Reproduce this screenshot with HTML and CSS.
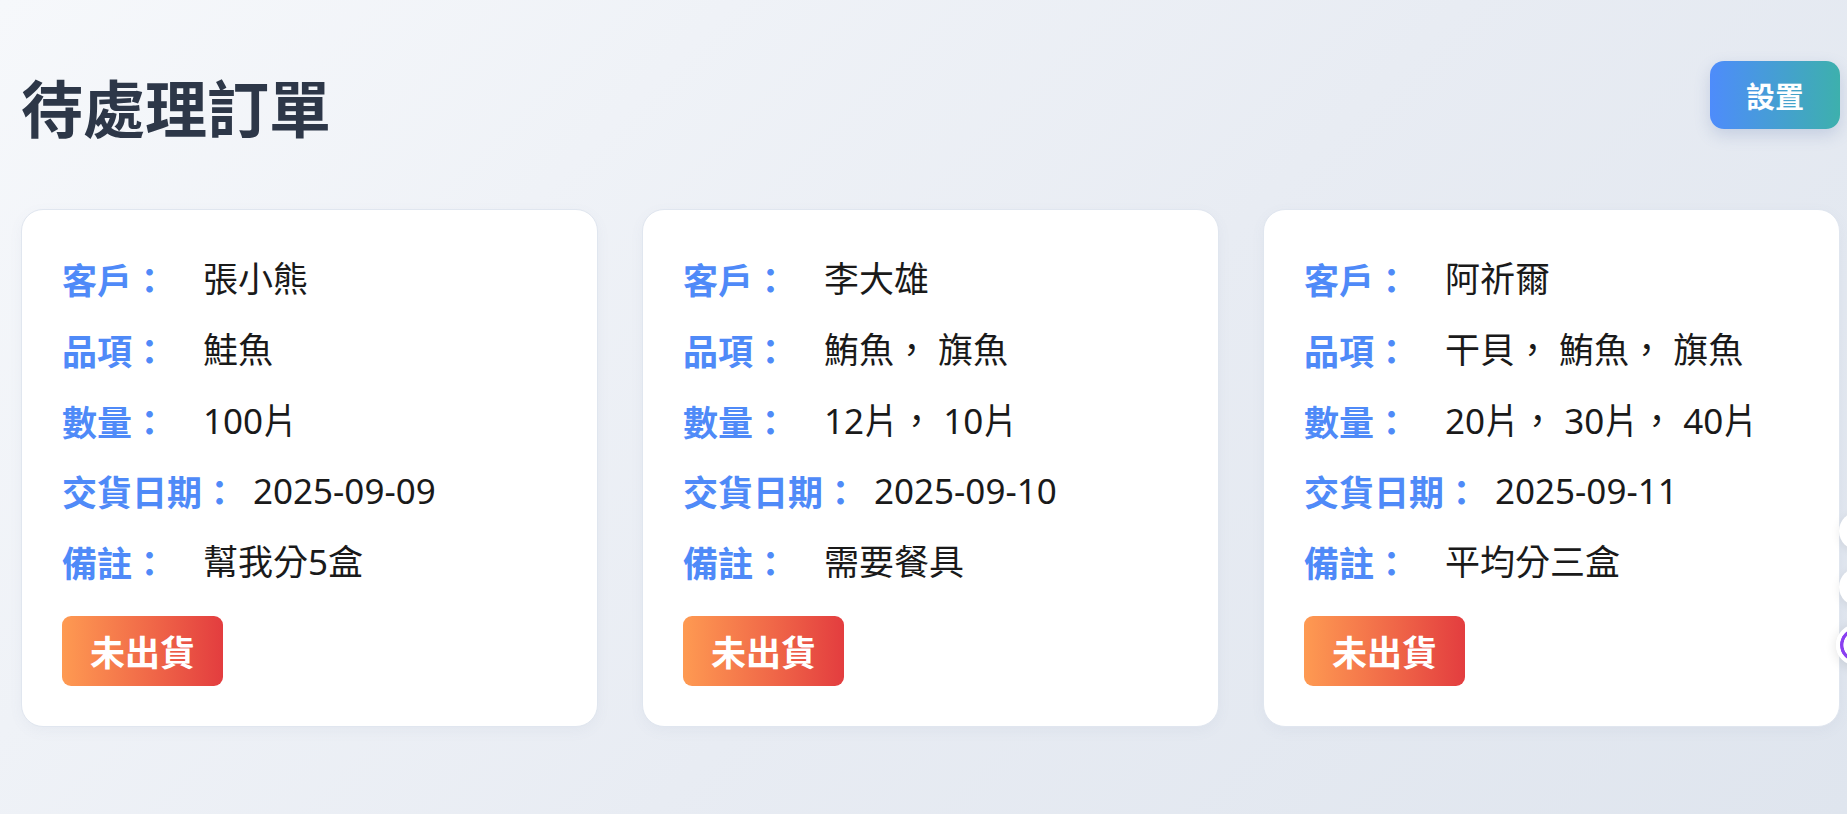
FILE: index.html
```html
<!DOCTYPE html>
<html lang="zh-Hant">
<head>
<meta charset="utf-8">
<title>待處理訂單</title>
<link rel="stylesheet" href="styles.css">
</head>
<body>
<div class="page">
  <header class="header">
    <h1 class="title">待處理訂單</h1>
    <button class="settings-btn">設置</button>
  </header>
  <main class="cards">
    <section class="card">
      <div class="row"><span class="label">客戶：</span><span class="value">張小熊</span></div>
      <div class="row"><span class="label">品項：</span><span class="value">鮭魚</span></div>
      <div class="row"><span class="label">數量：</span><span class="value">100片</span></div>
      <div class="row"><span class="label">交貨日期：</span><span class="value">2025-09-09</span></div>
      <div class="row"><span class="label">備註：</span><span class="value">幫我分5盒</span></div>
      <span class="badge">未出貨</span>
    </section>
    <section class="card">
      <div class="row"><span class="label">客戶：</span><span class="value">李大雄</span></div>
      <div class="row"><span class="label">品項：</span><span class="value">鮪魚， 旗魚</span></div>
      <div class="row"><span class="label">數量：</span><span class="value">12片， 10片</span></div>
      <div class="row"><span class="label">交貨日期：</span><span class="value">2025-09-10</span></div>
      <div class="row"><span class="label">備註：</span><span class="value">需要餐具</span></div>
      <span class="badge">未出貨</span>
    </section>
    <section class="card">
      <div class="row"><span class="label">客戶：</span><span class="value">阿祈爾</span></div>
      <div class="row"><span class="label">品項：</span><span class="value">干貝， 鮪魚， 旗魚</span></div>
      <div class="row"><span class="label">數量：</span><span class="value">20片， 30片， 40片</span></div>
      <div class="row"><span class="label">交貨日期：</span><span class="value">2025-09-11</span></div>
      <div class="row"><span class="label">備註：</span><span class="value">平均分三盒</span></div>
      <span class="badge">未出貨</span>
    </section>
  </main>
</div>
<div class="float-tools">
  <span class="float-btn"></span>
  <span class="float-btn"></span>
  <span class="float-btn float-btn-accent"></span>
</div>
</body>
</html>
```

FILE: styles.css
```css
html, body {
  margin: 0;
  padding: 0;
  height: 100%;
}

body {
  background: linear-gradient(135deg, #f6f8fb 0%, #e8ecf3 55%, #dfe5ee 100%);
  font-family: "Noto Sans", "Noto Sans CJK TC", sans-serif;
  color: #1a1a1a;
  overflow: hidden;
}

.page {
  padding: 61px 7px 0 21px;
}

.header {
  display: flex;
  justify-content: space-between;
  align-items: flex-start;
}

.title {
  margin: 9px 0 0 0;
  font-family: "Noto Sans CJK TC", sans-serif;
  font-size: 62px;
  line-height: 72px;
  font-weight: 700;
  color: #2d3748;
}

.settings-btn {
  border: none;
  height: 68px;
  padding: 0 36px;
  border-radius: 14px;
  background: linear-gradient(90deg, #4e8cfb 0%, #3db0ad 100%);
  color: #ffffff;
  font-family: "Noto Sans CJK TC", sans-serif;
  font-size: 29px;
  font-weight: 700;
  line-height: 68px;
  box-shadow: 0 6px 16px rgba(80, 110, 170, 0.22);
  cursor: pointer;
}

.cards {
  margin-top: 67px;
  display: grid;
  grid-template-columns: repeat(3, 1fr);
  gap: 44px;
}

.card {
  background: #ffffff;
  border: 1px solid #e0e6ef;
  border-radius: 22px;
  padding: 40px;
  box-shadow: 0 4px 14px rgba(100, 120, 160, 0.06);
  display: flex;
  flex-direction: column;
  align-items: flex-start;
}

.row {
  display: flex;
  font-size: 35px;
  line-height: 57.8px;
  margin-bottom: 13px;
}

.row:last-of-type {
  margin-bottom: 0;
}

.label {
  min-width: 125px;
  margin-right: 16px;
  font-family: "Noto Sans CJK TC", sans-serif;
  font-weight: 700;
  color: #4f8af8;
  white-space: nowrap;
}

.value {
  color: #1a1a1a;
  white-space: nowrap;
}

.badge {
  margin-top: 25px;
  display: inline-block;
  padding: 12px 28px;
  line-height: 46px;
  font-family: "Noto Sans CJK TC", sans-serif;
  font-size: 35px;
  font-weight: 700;
  color: #ffffff;
  border-radius: 9px;
  background: linear-gradient(90deg, #fe9a52 0%, #f06848 55%, #e33d3f 100%);
}

.float-tools {
  position: fixed;
  right: -30px;
  top: 512px;
  display: flex;
  flex-direction: column;
  align-items: flex-end;
  gap: 18px;
}

.float-btn {
  display: block;
  width: 38px;
  height: 38px;
  border-radius: 50%;
  background: #ffffff;
  box-shadow: 0 2px 10px rgba(0, 0, 0, 0.08);
}

.float-btn-accent {
  width: 42px;
  height: 42px;
  margin-right: -1px;
  box-sizing: border-box;
  border: 4px solid #ffffff;
  background: radial-gradient(circle, #ffffff 55%, #8a3ff0 58%, #8a3ff0 70%, #ffffff 73%);
  box-shadow: 0 2px 12px rgba(0, 0, 0, 0.12);
}
```
